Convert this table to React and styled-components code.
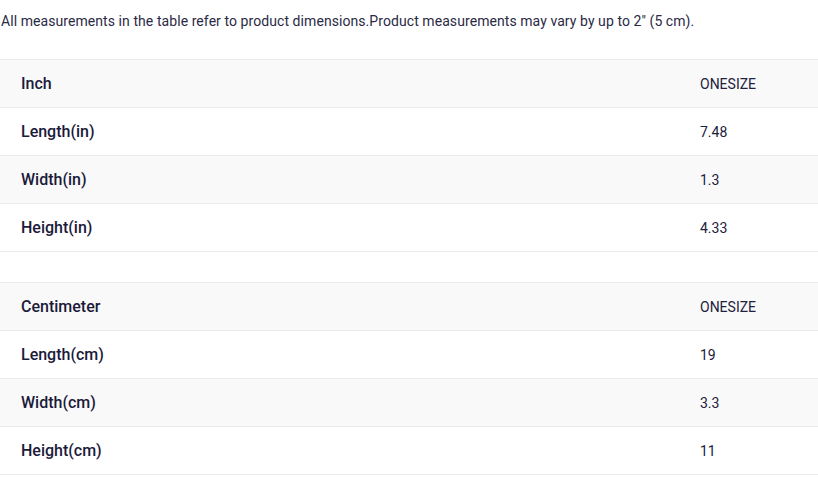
import React from "react";
import styled, { createGlobalStyle } from "styled-components";

const GlobalStyle = createGlobalStyle`
  body {
    margin: 0;
    background: #fff;
    font-family: Roboto, "Liberation Sans", sans-serif;
    color: #22213d;
  }
`;

const tables = [
  {
    unit: "Inch",
    rows: [
      ["Length(in)", "7.48"],
      ["Width(in)", "1.3"],
      ["Height(in)", "4.33"],
    ],
  },
  {
    unit: "Centimeter",
    rows: [
      ["Length(cm)", "19"],
      ["Width(cm)", "3.3"],
      ["Height(cm)", "11"],
    ],
  },
];

const SizeTable = ({ unit, rows }) => (
  <Table>
    <Row shaded>
      <Label>{unit}</Label>
      <Value>ONESIZE</Value>
    </Row>
    {rows.map(([name, val], i) => (
      <Row key={name} shaded={i % 2 === 1}>
        <Label>{name}</Label>
        <Value>{val}</Value>
      </Row>
    ))}
  </Table>
);

const App = () => (
  <>
    <GlobalStyle />
    <Page>
      <Note>
        All measurements in the table refer to product dimensions.Product measurements may vary by up to 2" (5 cm).
      </Note>
      {tables.map(t => (
        <SizeTable key={t.unit} unit={t.unit} rows={t.rows} />
      ))}
    </Page>
  </>
);

const Page = styled.div`
  width: 818px;
  display: flex;
  flex-direction: column;
  gap: 30px;
`;
const Note = styled.p`
  margin: 11px 0 -2px 1px;
  font-size: 14px;
  letter-spacing: 0.07px;
  line-height: 20px;
  color: #2b2a45;
`;
const Table = styled.div`
  display: flex;
  flex-direction: column;
  border-top: 1px solid #ebebeb;
`;
const Row = styled.div`
  display: grid;
  grid-template-columns: 700px 1fr;
  align-items: center;
  height: 47px;
  border-bottom: 1px solid #ebebeb;
  background: ${props => props.shaded ? '#f9f9f9' : '#fff'};
`;
const Label = styled.div`
  padding-left: 21px;
  font-size: 16px;
  font-weight: 500;
  color: #1b1a3a;
`;
const Value = styled.div`
  font-size: 14px;
  color: #22213d;
`;

export default App;
